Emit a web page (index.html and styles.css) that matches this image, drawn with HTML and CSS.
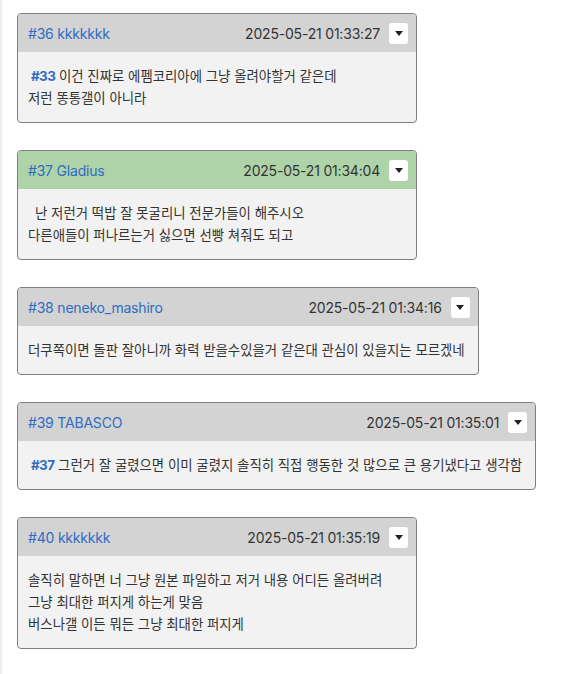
FILE: index.html
```html
<!DOCTYPE html>
<html lang="ko">
<head>
    <meta charset="UTF-8">
    <meta name="viewport" content="width=device-width, initial-scale=1.0">
    <title>Comments</title>
    <link rel="stylesheet" href="styles.css">
</head>
<body>
    <div class="thread">

        <!-- #36 -->
        <div class="post">
            <div class="post-head">
                <a href="#" class="post-author">#36 kkkkkkk</a>
                <span class="post-date">2025-05-21 01:33:27</span>
                <button class="post-menu" type="button"><span class="caret"></span></button>
            </div>
            <div class="post-body">
                <a href="#" class="reply-ref">#33</a> 이건 진짜로 에펨코리아에 그냥 올려야할거 같은데<br>
                저런 똥통갤이 아니라
            </div>
        </div>

        <!-- #37 -->
        <div class="post">
            <div class="post-head op">
                <a href="#" class="post-author">#37 Gladius</a>
                <span class="post-date">2025-05-21 01:34:04</span>
                <button class="post-menu" type="button"><span class="caret"></span></button>
            </div>
            <div class="post-body indent">
                난 저런거 떡밥 잘 못굴리니 전문가들이 해주시오<br>
                다른애들이 퍼나르는거 싫으면 선빵 쳐줘도 되고
            </div>
        </div>

        <!-- #38 -->
        <div class="post">
            <div class="post-head">
                <a href="#" class="post-author">#38 neneko_mashiro</a>
                <span class="post-date">2025-05-21 01:34:16</span>
                <button class="post-menu" type="button"><span class="caret"></span></button>
            </div>
            <div class="post-body">
                더쿠쪽이면 돌판 잘아니까 화력 받을수있을거 같은대 관심이 있을지는 모르겠네
            </div>
        </div>

        <!-- #39 -->
        <div class="post">
            <div class="post-head">
                <a href="#" class="post-author">#39 TABASCO</a>
                <span class="post-date">2025-05-21 01:35:01</span>
                <button class="post-menu" type="button"><span class="caret"></span></button>
            </div>
            <div class="post-body">
                <a href="#" class="reply-ref">#37</a> 그런거 잘 굴렸으면 이미 굴렸지 솔직히 직접 행동한 것 많으로 큰 용기냈다고 생각함
            </div>
        </div>

        <!-- #40 -->
        <div class="post">
            <div class="post-head">
                <a href="#" class="post-author">#40 kkkkkkk</a>
                <span class="post-date">2025-05-21 01:35:19</span>
                <button class="post-menu" type="button"><span class="caret"></span></button>
            </div>
            <div class="post-body">
                솔직히 말하면 너 그냥 원본 파일하고 저거 내용 어디든 올려버려<br>
                그냥 최대한 퍼지게 하는게 맞음<br>
                버스나갤 이든 뭐든 그냥 최대한 퍼지게
            </div>
        </div>

    </div>
</body>
</html>
```

FILE: styles.css
```css
body { margin: 0; background: #fff; font-family: Inter, "Noto Sans CJK KR", sans-serif; color: #333; }
.thread { min-height: 100vh; border-left: 2px solid #ececec; padding: 13px 0 1px 15px; box-sizing: border-box; }

.post { width: fit-content; min-width: 400px; box-sizing: border-box; margin-bottom: 27px; border: 1px solid #7f7f7f; border-radius: 4px; overflow: hidden; background: #f2f2f2; }
.post-head { display: flex; align-items: center; height: 38px; padding: 0 8px 0 10px; background: #d3d3d3; font-size: 14px; letter-spacing: -0.2px; }
.post-head.op { background: #aed3a8; }
.post-author { color: #2f6cc4; text-decoration: none; }
.post-date { margin-left: auto; padding-left: 24px; color: #333; }
.post-menu { width: 19px; height: 21px; margin-left: 9px; padding: 0; border: none; border-radius: 3px; background: #fff; display: flex; align-items: center; justify-content: center; cursor: pointer; }
.caret { width: 0; height: 0; border-left: 4px solid transparent; border-right: 4px solid transparent; border-top: 5px solid #222; }

.post-body { padding: 13px 13px 13px 10px; font-size: 13.4px; line-height: 22px; color: #333; }
.post-body.indent { text-indent: 7px; }
.reply-ref { color: #2f6cc4; font-weight: 700; text-decoration: none; margin-left: 3px; letter-spacing: -0.6px; }
```
